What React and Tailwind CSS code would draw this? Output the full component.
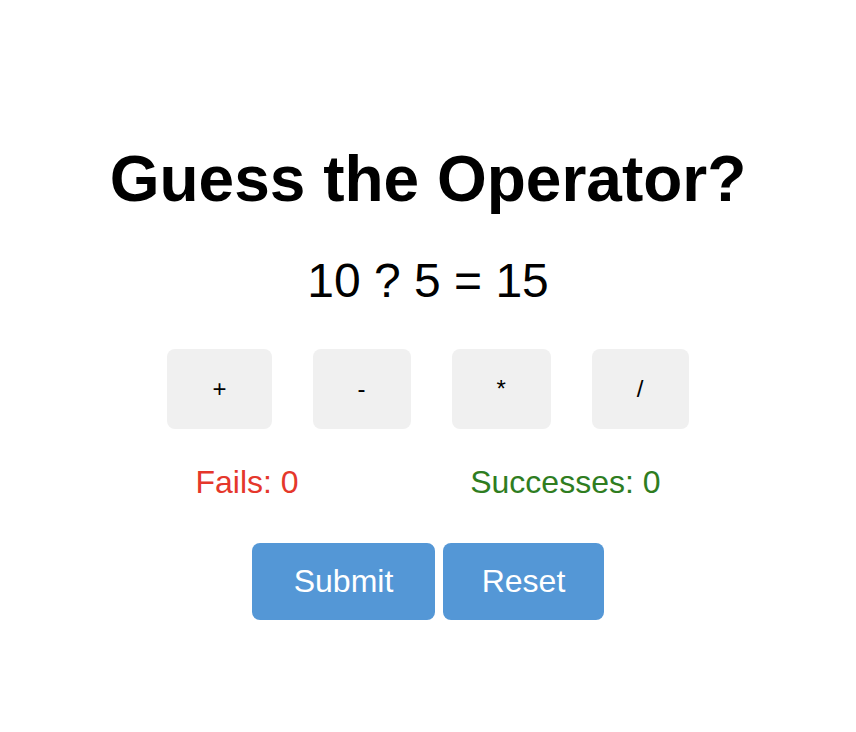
import React, { useState } from "react";

const ops = ["+", "-", "*", "/"];

const App = () => {
  const [picked, setPicked] = useState(null);
  const [fails, setFails] = useState(0);
  const [successes, setSuccesses] = useState(0);

  const handleSubmit = () => {
    if (!picked) return;
    if (picked === "+") {
      setSuccesses((prev) => prev + 1);
    } else {
      setFails((prev) => prev + 1);
    }
    setPicked(null);
  };

  const handleReset = () => {
    setPicked(null);
    setFails(0);
    setSuccesses(0);
  };

  return (
    <div
      className="min-h-screen bg-white flex justify-center pt-[143px]"
      style={{ fontFamily: '"Liberation Sans", Arial, sans-serif' }}
    >
      <div className="w-fit flex flex-col items-center text-black">
        {/* Title */}
        <h1 className="text-[64px] leading-[1.15] font-bold">
          Guess the Operator?
        </h1>

        {/* Equation */}
        <div className="mt-[36px] text-[48px] leading-[1.15]">10 ? 5 = 15</div>

        {/* Operator buttons */}
        <div className="mt-[41px] flex gap-[41px]">
          {ops.map((op) => (
            <button
              key={op}
              onClick={() => setPicked(op)}
              className={`h-20 px-[45px] rounded-lg text-[24px] cursor-pointer ${
                picked === op ? "bg-[#dcdcdc]" : "bg-[#f0f0f0]"
              }`}
            >
              {op}
            </button>
          ))}
        </div>

        {/* Score */}
        <div className="mt-[35px] w-full flex justify-around text-[32px] leading-[1.15]">
          <span className="text-[#e5372b]">Fails: {fails}</span>
          <span className="text-[#2f7d1f]">Successes: {successes}</span>
        </div>

        {/* Actions */}
        <div className="mt-[42px] flex gap-[8px]">
          <button
            onClick={handleSubmit}
            className="w-[183px] h-[77px] rounded-lg bg-[#5497d6] text-white text-[32px] cursor-pointer"
          >
            Submit
          </button>
          <button
            onClick={handleReset}
            className="w-[161px] h-[77px] rounded-lg bg-[#5497d6] text-white text-[32px] cursor-pointer"
          >
            Reset
          </button>
        </div>
      </div>
    </div>
  );
};

export default App;
